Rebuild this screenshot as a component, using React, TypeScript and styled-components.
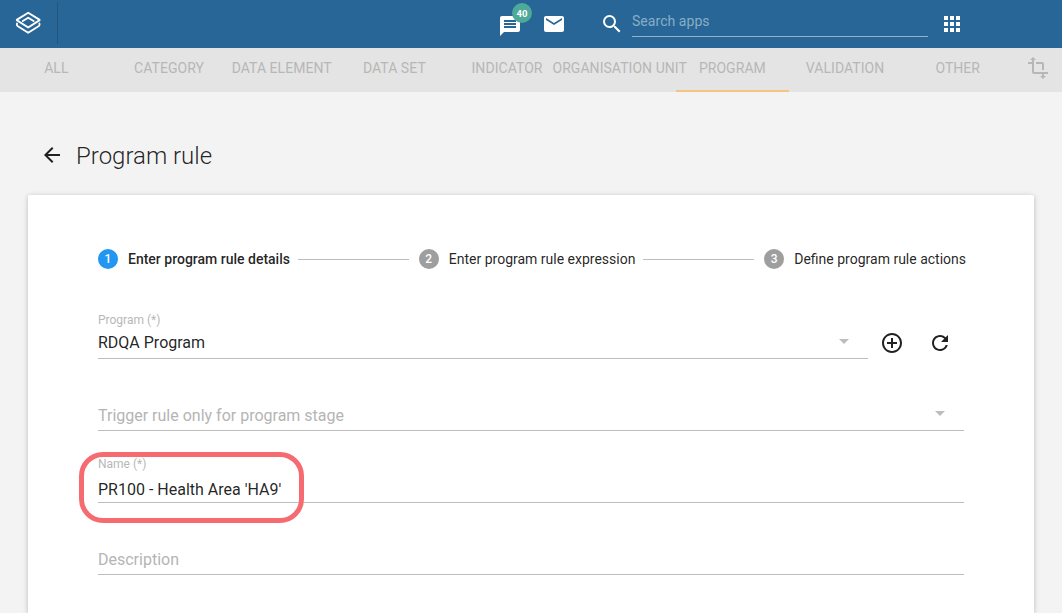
import React from 'react';
import styled, { createGlobalStyle } from 'styled-components';
import {
  MdMessage, MdEmail, MdSearch, MdApps, MdTransform, MdArrowBack,
  MdAddCircleOutline, MdRefresh, MdArrowDropDown,
} from 'react-icons/md';

const GlobalStyle = createGlobalStyle`
  * { box-sizing: border-box; }
  body {
    margin: 0;
    background: #f3f3f3;
    font-family: Roboto, "Liberation Sans", sans-serif;
    color: rgba(0, 0, 0, 0.87);
  }
  svg { display: block; flex: none; }
`;

const Header = styled.header`
  display: flex;
  align-items: center;
  height: 48px;
  background: #276696;
  color: #fff;
`;

const LogoBox = styled.div`
  display: flex;
  align-items: center;
  width: 58px;
  height: 42px;
  padding-left: 15px;
  border-right: 1px solid #22557f;
  margin-top: -2px;
`;

const HeaderTools = styled.div`
  display: flex;
  align-items: center;
  margin-left: 440px;
`;

const MessageLink = styled.div`
  position: relative;
  margin-right: 20px;
  top: 2px;
`;

const Badge = styled.span`
  position: absolute;
  left: 14px;
  top: -11px;
  width: 20px;
  height: 20px;
  border-radius: 50%;
  background: #4da999;
  font-size: 9.5px;
  font-weight: 700;
  line-height: 21px;
  text-align: center;
`;

const SearchIcon = styled.div`
  margin-left: 34px;
`;

const SearchField = styled.div`
  width: 296px;
  height: 30px;
  margin: -4px 0 0 8px;
  padding-top: 6px;
  border-bottom: 1px solid #93b2cb;
  color: #8aadc7;
  font-size: 14px;
  line-height: 17px;
  letter-spacing: 0.05px;
`;

const AppsIcon = styled.div`
  margin-left: 12px;
`;

const TabBar = styled.nav`
  display: flex;
  height: 44px;
  background: #e4e4e4;
  color: #b7b7b7;
`;

const Tab = styled.div<{ $active?: boolean }>`
  flex: 1 1 0;
  min-width: 0;
  display: flex;
  justify-content: center;
  padding-top: 12px;
  border-bottom: 2px solid ${(p) => (p.$active ? '#f2c580' : 'transparent')};
  font-size: 14px;
  line-height: 17px;
  letter-spacing: 0.05px;
  white-space: nowrap;
`;

const TabTool = styled.div`
  width: 48px;
  padding: 8px 12px 0;
`;

const Title = styled.h1`
  display: flex;
  align-items: center;
  height: 30px;
  margin: 48px 0 0 40px;
  font-size: 24px;
  font-weight: 300;
  gap: 12px;
`;

const TitleText = styled.span`
  padding-top: 2px;
`;

const Card = styled.main`
  width: 1006px;
  height: 418px;
  margin: 25px 0 0 28px;
  padding: 54px 70px 0;
  border-radius: 2px 2px 0 0;
  background: #fff;
  box-shadow: 0 1px 6px rgba(0, 0, 0, 0.12), 0 1px 4px rgba(0, 0, 0, 0.12);
`;

const Stepper = styled.div`
  display: flex;
  align-items: center;
  width: 868px;
  height: 20px;
`;

const StepNumber = styled.span<{ $active?: boolean }>`
  flex: none;
  width: 20px;
  height: 20px;
  margin-right: 10px;
  border-radius: 50%;
  background: ${(p) => (p.$active ? '#2196f3' : '#9e9e9e')};
  color: #fff;
  font-size: 12px;
  font-weight: 500;
  line-height: 20px;
  text-align: center;
`;

const StepLabel = styled.span<{ $active?: boolean }>`
  font-size: 14px;
  font-weight: ${(p) => (p.$active ? 500 : 400)};
  white-space: nowrap;
`;

const Connector = styled.span`
  flex: 1;
  height: 1px;
  margin: 1px 10px 0 8px;
  background: #bdbdbd;
`;

const Form = styled.div`
  display: flex;
  flex-direction: column;
  gap: 20px;
  width: 866px;
  padding-top: 38px;
`;

const FieldRow = styled.div`
  display: flex;
  height: 52px;
`;

const Field = styled.div`
  position: relative;
  display: flex;
  flex-direction: column;
  flex: 1;
  border-bottom: 1px solid #bdbdbd;
`;

const FieldLabel = styled.span`
  height: 21px;
  padding-top: 6px;
  color: #b8b8b8;
  font-size: 12px;
  line-height: 15px;
`;

const Value = styled.span<{ $gap: number; $hint?: boolean }>`
  margin-top: ${(p) => p.$gap}px;
  font-size: 16px;
  line-height: 20px;
  color: ${(p) => (p.$hint ? '#b5b5b5' : 'rgba(0, 0, 0, 0.87)')};
`;

const Arrow = styled.span`
  position: absolute;
  right: 12px;
  bottom: 5px;
  color: #bdbdbd;
`;

const FieldActions = styled.div`
  display: flex;
  gap: 24px;
  width: 96px;
  padding: 24px 0 0 12px;
`;

const Highlight = styled.div`
  position: absolute;
  left: -19px;
  top: 1px;
  width: 225px;
  height: 71px;
  border: 5px solid #f56b70;
  border-radius: 24px;
`;

const Logo = () => (
  <svg width="27" height="24" viewBox="0 0 27 24" fill="none" stroke="#fff" strokeWidth="1.9" strokeLinejoin="round" strokeLinecap="round">
    <path d="M13.2 1.8 24.3 8.6Q24.9 9 24.3 9.4L13.2 16.5 2.1 9.4Q1.5 9 2.1 8.6Z" />
    <path d="M7.8 10 13.2 6.7 18.6 10" />
    <path d="M2 12.6Q1.4 14.2 2.5 15L13.2 21.8 23.9 15Q25 14.2 24.4 12.6" />
  </svg>
);

const tabs = ['ALL', 'CATEGORY', 'DATA ELEMENT', 'DATA SET', 'INDICATOR', 'ORGANISATION UNIT', 'PROGRAM', 'VALIDATION', 'OTHER'];
const steps = ['Enter program rule details', 'Enter program rule expression', 'Define program rule actions'];

export default function App() {
  return (
    <>
      <GlobalStyle />
      <Header>
        <LogoBox><Logo /></LogoBox>
        <HeaderTools>
          <MessageLink>
            <MdMessage size={24} />
            <Badge>40</Badge>
          </MessageLink>
          <MdEmail size={24} />
          <SearchIcon><MdSearch size={24} /></SearchIcon>
          <SearchField>Search apps</SearchField>
          <AppsIcon><MdApps size={24} /></AppsIcon>
        </HeaderTools>
      </Header>
      <TabBar>
        {tabs.map((t) => <Tab key={t} $active={t === 'PROGRAM'}>{t}</Tab>)}
        <TabTool><MdTransform size={24} /></TabTool>
      </TabBar>
      <Title><MdArrowBack size={24} /><TitleText>Program rule</TitleText></Title>
      <Card>
        <Stepper>
          {steps.map((s, i) => (
            <React.Fragment key={s}>
              {i > 0 && <Connector />}
              <StepNumber $active={i === 0}>{i + 1}</StepNumber>
              <StepLabel $active={i === 0}>{s}</StepLabel>
            </React.Fragment>
          ))}
        </Stepper>
        <Form>
          <FieldRow>
            <Field>
              <FieldLabel>Program (*)</FieldLabel>
              <Value $gap={5}>RDQA Program</Value>
              <Arrow><MdArrowDropDown size={24} /></Arrow>
            </Field>
            <FieldActions>
              <MdAddCircleOutline size={24} />
              <MdRefresh size={24} />
            </FieldActions>
          </FieldRow>
          <FieldRow>
            <Field>
              <Value $gap={27} $hint>Trigger rule only for program stage</Value>
              <Arrow><MdArrowDropDown size={24} /></Arrow>
            </Field>
          </FieldRow>
          <FieldRow>
            <Field>
              <FieldLabel>Name (*)</FieldLabel>
              <Value $gap={8}>PR100 - Health Area 'HA9'</Value>
              <Highlight />
            </Field>
          </FieldRow>
          <FieldRow>
            <Field>
              <Value $gap={27} $hint>Description</Value>
            </Field>
          </FieldRow>
        </Form>
      </Card>
    </>
  );
}
